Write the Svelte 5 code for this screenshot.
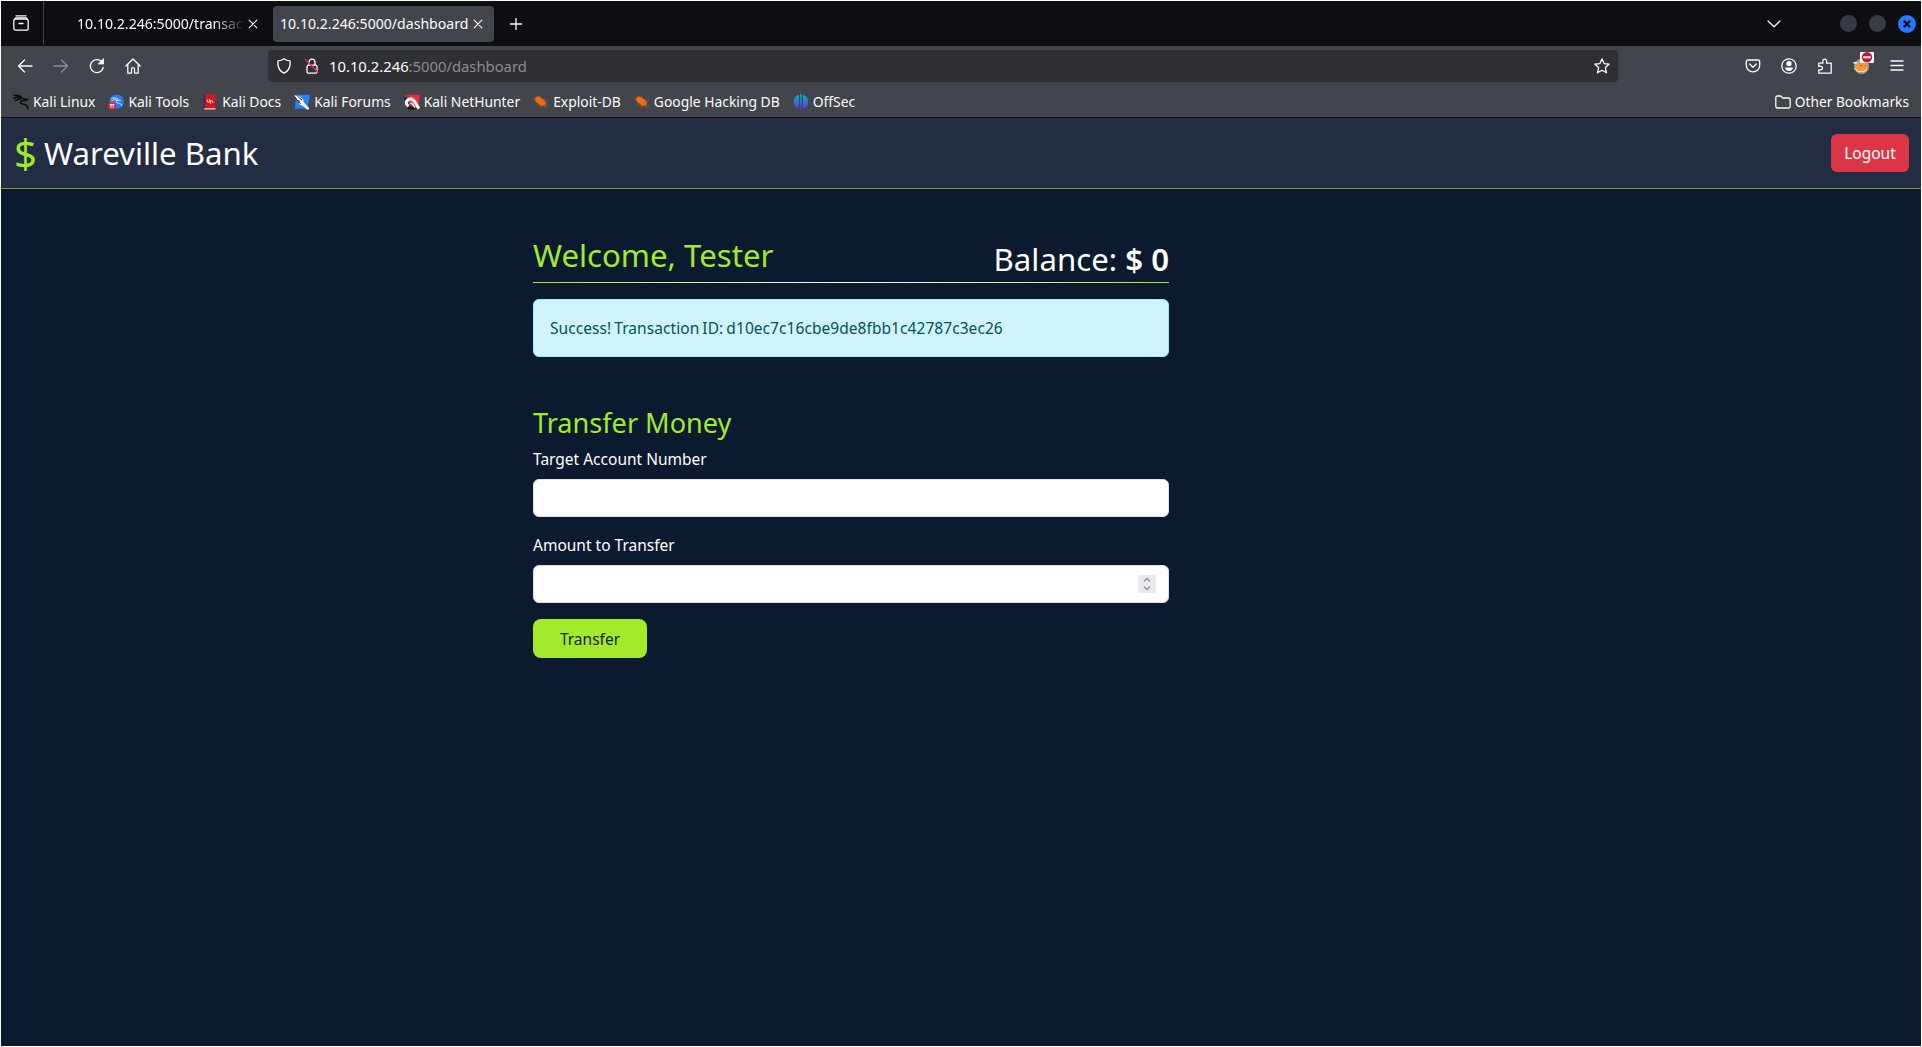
<script>
  const bookmarks = [
    { name: "Kali Linux", icon: "linux" },
    { name: "Kali Tools", icon: "tools" },
    { name: "Kali Docs", icon: "docs" },
    { name: "Kali Forums", icon: "forums" },
    { name: "Kali NetHunter", icon: "nethunter" },
    { name: "Exploit-DB", icon: "bug" },
    { name: "Google Hacking DB", icon: "bug" },
    { name: "OffSec", icon: "offsec" },
  ];

  let account = $state('');
  let amount = $state('');
  let message = $state('Success! Transaction ID: d10ec7c16cbe9de8fbb1c42787c3ec26');
</script>

{#snippet closeIcon()}
  <svg class="close" viewBox="0 0 12 12" width="12" height="12"><path d="M2.2 2.2l7.6 7.6M9.8 2.2l-7.6 7.6" /></svg>
{/snippet}

{#snippet bookmarkIcon(icon)}
  <svg viewBox="0 0 16 16" width="16" height="16">
    {#if icon === 'linux'}
      <path d="M.5 1.6c3-.6 6 .1 8.300 2M.5 4.500c2.500-1.500 5-1.600 7.800-.6M8 3.600l3.500 1.500 2.800.3-1.800 1.200c-2.500-.3-4-.2-4.700.9-.7 1.500.8 2.600 3.200 2.800 2.300.3 3.600 1.700 4 5.200M2 7c1.700-1.500 3.700-2.100 6-2" fill="none" stroke="#0b0c0e" stroke-width="1.500" />
    {:else if icon === 'tools'}
      <circle cx="8.800" cy="7.600" r="7.200" fill="#2777ff" />
      <path d="M3 4.500c3-1 5.500-.7 7.500.9M3.500 6.800c2-1.200 4-1.200 6-.7l3.500.4M9.500 6c-2 1.200-1 3 1.200 3.200 1.800.3 2.700 1 3.300 2.500" fill="none" stroke="#b9d3ff" stroke-width="1.100" />
      <circle cx="4" cy="11.800" r="3.800" fill="#ee2a36" />
      <path d="M2 10.500h4.200M3 10.500v3.200M5.200 10.500v3.200" fill="none" stroke="#fff" stroke-width=".9" />
    {:else if icon === 'docs'}
      <path d="M1.500 1h2v14.500h-2z" fill="#14356f" />
      <path d="M3 .5h10.500v14H3z" fill="#d8141c" />
      <path d="M2 14.300h11.500v1.200H2z" fill="#e9d9db" />
      <path d="M5.300 5.700v1.300c0 1.500 2.200 1.500 2.700.4s2.700-1.100 2.700.4v1.200M7.200 5.200l1.600 4.400" fill="none" stroke="#fff" stroke-width=".9" />
    {:else if icon === 'forums'}
      <path d="M2 .8h14l-2.500 14H1z" fill="#2581fb" />
      <path d="M0 .5l2.500 0 6 4 1.500 4 5 5.500v1.500h-2l-4-3.500-4-2L2 4.500z" fill="#fff" />
      <path d="M0 .5l4 .8M1 3l4 6M3.500 2.200l4.500 4M4 6l2.500 4" fill="none" stroke="#24272c" stroke-width="1" />
    {:else if icon === 'nethunter'}
      <path d="M4.500 .8H16l-2 13.500L5 10z" fill="#f12d38" />
      <path d="M0 3.500l4 1-2 7zM3 12.500l7 .5 2 2.500H4z" fill="#14161a" />
      <path d="M4.500 12.200C.6 9.500 2.500 5 6.500 5c4.500 0 4.500 4.500 8.500 9.500" fill="none" stroke="#fff" stroke-width="3" />
      <path d="M6.500 9.200c2.500-.3 2.500 2.300 4.500 4.300" fill="none" stroke="#fff" stroke-width="1.400" />
      <path d="M2.500 1l1.800 2.300" stroke="#f12d38" stroke-width="1.200" />
    {:else if icon === 'bug'}
      <path d="M1.500 4.800L4 2.800c2-.9 3.800.4 5 1.500 2.300 1.500 3.700 3.200 4 5.500l-1.500 2c-2 .8-4.500-.2-6-2C3.200 8.500 2 7 1.500 4.800z" fill="#f26a16" />
      <path d="M0 5l3 .3M2.500 2l2 2M7 1.500l1 3M12 4.500l-2.500 1.800M15 6.200L11.500 8M15 11.500l-3.500-1M13.500 14.500L10 11M7.500 14l.3-3.500M4 12l1.500-3" fill="none" stroke="#ae5a27" stroke-width=".8" />
    {:else}
      <defs>
        <linearGradient id="offsec" gradientUnits="userSpaceOnUse" x1="0" y1="0" x2="0" y2="16">
          <stop offset="0" stop-color="#16b0b8" />
          <stop offset=".5" stop-color="#2b78cf" />
          <stop offset="1" stop-color="#7722dc" />
        </linearGradient>
      </defs>
      <path d="M6 .7v14.400C2.500 14 .7 11.300.7 7.900S2.600 1.800 6 .7zM7.200 0h1.500v16H7.200zM10 .7c3.400 1.100 5.300 3.800 5.300 7.200S13.500 14 10 15.100z" fill="url(#offsec)" />
    {/if}
  </svg>
{/snippet}

<div class="window">
  <div class="tab-strip">
    <div class="recent">
      <svg class="line" viewBox="0 0 16 16" width="16" height="16">
        <path d="M3 .8h10" /><rect x=".8" y="4" width="14.400" height="11.200" rx="2" /><path d="M6 8.500h4" />
        <path d="M1.500 4.500l1.200-1.700h10.600l1.200 1.700" />
      </svg>
    </div>
    <div class="tab">
      <span class="tab-title faded">10.10.2.246:5000/transac</span>
      {@render closeIcon()}
    </div>
    <div class="tab active">
      <span class="tab-title">10.10.2.246:5000/dashboard</span>
      {@render closeIcon()}
    </div>
    <svg class="line new-tab" viewBox="0 0 12 12" width="12" height="12"><path d="M6 0v12M0 6h12" /></svg>
    <div class="window-controls">
      <svg class="line chevron" viewBox="0 0 14 8" width="14" height="8"><path d="M1 1l6 5.700L13 1" /></svg>
      <span class="dot"></span>
      <span class="dot"></span>
      <span class="dot quit">
        <svg viewBox="0 0 8 8" width="8" height="8"><path d="M.8.8l6.400 6.400M7.200.8L.8 7.200" stroke="#0d0e11" stroke-width="2.200" /></svg>
      </span>
    </div>
  </div>

  <div class="toolbar">
    <div class="nav">
      <svg class="line" viewBox="0 0 16 16" width="16" height="16"><path d="M15 8H1.500M7.500 2l-6 6 6 6" /></svg>
      <svg class="line disabled" viewBox="0 0 16 16" width="16" height="16"><path d="M1 8h13.500M8.500 2l6 6-6 6" /></svg>
      <svg class="line" viewBox="0 0 16 16" width="16" height="16"><path d="M14.200 9.500A6.500 6.500 0 1 1 12.500 3.500" /><path d="M14.500 1v5H9.500z" fill="#fbfbfe" stroke-width=".8" /></svg>
      <svg class="line" viewBox="0 0 16 16" width="16" height="16"><path d="M.8 8L8 1l7.200 7M2.800 6.500v8.700h3.700v-4a1.500 1.500 0 0 1 3 0v4h3.700V6.500" /></svg>
    </div>
    <div class="url-bar">
      <svg class="line" viewBox="0 0 16 16" width="16" height="16"><path d="M8 .8c1.500 1.300 3.500 2 6 2 .7 5.500-1.200 10-6 12.400C3.200 12.800 1.300 8.300 2 2.800c2.500 0 4.500-.7 6-2z" /></svg>
      <svg class="line lock" viewBox="0 0 16 16" width="16" height="16">
        <path d="M5 7V4.200a3 3 0 0 1 6 0V7" /><rect x="3" y="7.200" width="10" height="8" rx="1.500" />
        <path d="M1.500 1.500l12.800 13.200" stroke="#e22850" />
      </svg>
      <span class="url"><b>10.10.2.246</b>:5000/dashboard</span>
      <svg class="line star" viewBox="0 0 16 16" width="16" height="16"><path d="M8 .9l2.100 4.700 5.100.5-3.800 3.500 1.100 5.200L8 12.200l-4.500 2.600 1.100-5.200L.8 6.100l5.100-.5z" /></svg>
    </div>
    <div class="tools">
      <svg class="line" viewBox="0 0 16 16" width="16" height="16"><path d="M3 2h10a1.700 1.700 0 0 1 1.700 1.700v3.500a6.700 6.700 0 0 1-13.400 0V3.700A1.700 1.700 0 0 1 3 2z" /><path d="M4.700 6L8 9.200 11.300 6" /></svg>
      <svg class="line" viewBox="0 0 16 16" width="16" height="16"><circle cx="8" cy="8" r="7.200" /><circle cx="8" cy="5.600" r="2.700" fill="#fbfbfe" stroke="none" /><path d="M3.700 9.500h8.600c-.5 2-2.200 3.400-4.300 3.400S4.200 11.500 3.700 9.500z" fill="#fbfbfe" stroke="none" /></svg>
      <svg class="line" viewBox="0 0 16 16" width="16" height="16"><path d="M1.800 5.200h4V3a1.900 1.900 0 0 1 3.800 0v2.200h4.600v10H1.800v-3.400h2a1.700 1.700 0 0 0 0-3.400h-2z" /></svg>
      <span class="extension">
        <svg viewBox="0 0 18 18" width="18" height="18">
          <circle cx="9.500" cy="9.500" r="7.500" fill="#a9a097" />
          <path d="M3 7.500l3.800-.5 4.500-2 4.500 1.500-.8 5-2.500 2.500-5 .2L3.500 11z" fill="#f6982c" />
          <path d="M.5 5.500l3-.8 3 1.200-3.500 1.400z" fill="#cfe3dc" />
          <path d="M8 8.500l2 .5M12.500 8l.7 1" fill="none" stroke="#7a4a1c" stroke-width=".9" />
          <path d="M2.500 11.500l3.500 2.800 5.500.5 3.500-3" fill="none" stroke="#f8e0c4" stroke-width="1.100" />
        </svg>
        <span class="badge">
          <svg viewBox="0 0 14 11" width="14" height="11"><circle cx="7" cy="5.300" r="5.200" fill="#c01537" /><path d="M3.200 4.300h7.600v2H3.200z" fill="#fff" /></svg>
        </span>
      </span>
      <svg class="line menu" viewBox="0 0 16 16" width="16" height="16"><path d="M2 3h12M2 7.500h12M2 12h12" /></svg>
    </div>
  </div>

  <div class="bookmarks">
    {#each bookmarks as bookmark}
      <span class="bookmark">
        {@render bookmarkIcon(bookmark.icon)}
        {bookmark.name}
      </span>
    {/each}
    <span class="bookmark other">
      <svg class="line" viewBox="0 0 16 16" width="16" height="16"><path d="M2.500 2h3.300l2 2h5.700c1 0 1.700.7 1.700 1.700v6.600c0 1-.7 1.700-1.700 1.700h-11c-1 0-1.700-.7-1.700-1.700V3.700c0-1 .7-1.700 1.700-1.700z" /></svg>
      Other Bookmarks
    </span>
  </div>

  <header>
    <div class="brand"><span class="dollar">$</span> Wareville Bank</div>
    <button class="logout">Logout</button>
  </header>

  <main>
    <div class="summary">
      <h2>Welcome, Tester</h2>
      <div class="balance">Balance: <strong>$ 0</strong></div>
    </div>
    <div class="rule"></div>

    {#if message}
      <div class="alert">{message}</div>
    {/if}

    <form onsubmit={(e) => e.preventDefault()}>
      <h3>Transfer Money</h3>
      <label for="account">Target Account Number</label>
      <div class="field"><input id="account" type="text" bind:value={account} /></div>
      <label for="amount">Amount to Transfer</label>
      <div class="field">
        <input id="amount" type="text" inputmode="numeric" bind:value={amount} />
        <span class="spinner">
          <svg viewBox="0 0 18 18" width="18" height="18"><path d="M6 6.500l3-3 3 3M6 11.500l3 3 3-3" fill="none" stroke="#9a9aa8" stroke-width="1.600" /></svg>
        </span>
      </div>
      <button class="transfer">Transfer</button>
    </form>
  </main>
</div>

<style>
  :global(body) {
    background: #fff;
    overflow: hidden;
  }

  .window {
    display: flex;
    flex-direction: column;
    box-sizing: border-box;
    width: 1922px;
    height: 1047px;
    border: 1px solid #fff;
    background: #0b1a2f;
    color: #fff;
    font-family: "Noto Sans", sans-serif;
    font-size: 15.5px;
  }

  svg {
    display: block;
    flex: none;
  }

  .line {
    fill: none;
    stroke: #fbfbfe;
    stroke-width: 1.3;
    stroke-linecap: round;
    stroke-linejoin: round;
  }

  .tab-strip {
    display: flex;
    align-items: center;
    height: 45px;
    background: #0d0e11;
    color: #fbfbfe;
  }

  .recent {
    display: flex;
    align-items: center;
    justify-content: center;
    box-sizing: border-box;
    width: 43px;
    height: 44px;
    align-self: flex-start;
    margin-right: 5px;
    padding-right: 2px;
    border-right: 1px solid #42454c;
  }

  .tab {
    display: flex;
    align-items: center;
    box-sizing: border-box;
    width: 220px;
    height: 36px;
    margin-right: 4px;
    padding: 0 10px 0 28px;
    border-radius: 4px;
    font-size: 14.1px;
  }

  .tab.active {
    width: 221px;
    padding-left: 7px;
    background: #42454c;
  }

  .tab-title {
    flex: 1;
    white-space: nowrap;
  }

  .faded {
    mask-image: linear-gradient(to left, transparent 2px, #000 34px);
  }

  .close {
    fill: none;
    stroke: #fbfbfe;
    stroke-width: 1.1;
    stroke-linecap: round;
  }

  .new-tab {
    margin-left: 12px;
  }

  .window-controls {
    display: flex;
    align-items: center;
    gap: 12px;
    margin-left: auto;
    padding-right: 5px;
  }

  .chevron {
    margin-right: 47px;
  }

  .dot {
    width: 17px;
    height: 17px;
    border-radius: 50%;
    background: #373b47;
  }

  .dot.quit {
    display: flex;
    align-items: center;
    justify-content: center;
    width: 18px;
    height: 18px;
    background: #2777ff;
  }

  .toolbar {
    display: flex;
    align-items: center;
    height: 40px;
    background: #42454c;
  }

  .nav {
    display: flex;
    gap: 20px;
    width: 251px;
    padding-left: 16px;
  }

  .disabled {
    opacity: 0.4;
  }

  .url-bar {
    display: flex;
    align-items: center;
    box-sizing: border-box;
    width: 1350px;
    height: 32px;
    padding: 0 8px;
    border-radius: 4px;
    background: #2f3035;
  }

  .lock {
    margin-left: 12px;
  }

  .url {
    margin-left: 9px;
    color: #8c8c90;
    font-size: 14.8px;
  }

  .url b {
    color: #fbfbfe;
    font-weight: 400;
  }

  .star {
    margin-left: auto;
  }

  .tools {
    display: flex;
    align-items: center;
    gap: 20px;
    margin-left: auto;
    padding-right: 16px;
  }

  .extension {
    position: relative;
    margin: 0 -1px;
  }

  .badge {
    position: absolute;
    top: -5px;
    right: -4px;
    border-radius: 1px;
    background: #fff;
  }

  .bookmarks {
    display: flex;
    align-items: center;
    gap: 13px;
    height: 31px;
    padding: 0 12px;
    border-bottom: 1px solid #0d0e11;
    background: #42454c;
    color: #fbfbfe;
    font-size: 13.87px;
  }

  .bookmark {
    display: flex;
    align-items: center;
    gap: 4px;
    white-space: nowrap;
  }

  .other {
    margin-left: auto;
    font-size: 13.75px;
  }

  header {
    display: flex;
    align-items: center;
    justify-content: space-between;
    height: 70px;
    padding: 0 12px 0 13px;
    border-bottom: 1px solid #74a72c;
    background: #222c42;
  }

  .brand {
    display: flex;
    align-items: center;
    gap: 10px;
    font-size: 31.2px;
    line-height: 38px;
  }

  .dollar {
    width: 20px;
    color: #a3ea2a;
    font-size: 40px;
    font-weight: 400;
    text-align: center;
  }

  button,
  input {
    border: none;
    font: inherit;
  }

  .logout {
    width: 78px;
    height: 38px;
    padding: 0;
    border-radius: 6px;
    background: #dc3545;
    color: #fff;
  }

  main {
    width: 636px;
    margin: 47px 0 0 532px;
  }

  h2,
  h3 {
    margin: 0;
    color: #a3ea2a;
    font-weight: 400;
  }

  .summary {
    display: flex;
    justify-content: space-between;
    height: 42px;
  }

  .summary h2,
  .balance {
    font-size: 31.2px;
    line-height: 38px;
  }

  .balance {
    align-self: flex-end;
  }

  .balance strong {
    font-weight: 600;
  }

  .rule {
    height: 1px;
    margin: 4px 0 16px;
    background: linear-gradient(to right, #a3ea2a, #fff, #a3ea2a);
  }

  .alert {
    box-sizing: border-box;
    height: 58px;
    padding: 16px;
    border: 1px solid #9eeaf9;
    border-radius: 6px;
    background: #cff4fc;
    color: #055160;
    letter-spacing: 0.06px;
    line-height: 24px;
    word-spacing: -1px;
  }

  form {
    display: flex;
    flex-direction: column;
    margin-top: 49px;
  }

  h3 {
    margin-bottom: 7px;
    font-size: 27.1px;
    line-height: 34px;
  }

  label {
    margin-bottom: 8px;
    line-height: 24px;
  }

  .field {
    display: flex;
    align-items: center;
    box-sizing: border-box;
    height: 38px;
    margin-bottom: 16px;
    padding: 0 12px;
    border: 1px solid #dee2e6;
    border-radius: 6px;
    background: #fff;
  }

  .field input {
    flex: 1;
    padding: 0;
    outline: none;
    background: none;
    color: #212529;
  }

  .spinner {
    background: #e9e9ed;
  }

  .transfer {
    align-self: flex-start;
    width: 114px;
    height: 39px;
    padding: 0;
    border-radius: 8px;
    background: #a3ea2a;
    color: #212529;
  }
</style>
